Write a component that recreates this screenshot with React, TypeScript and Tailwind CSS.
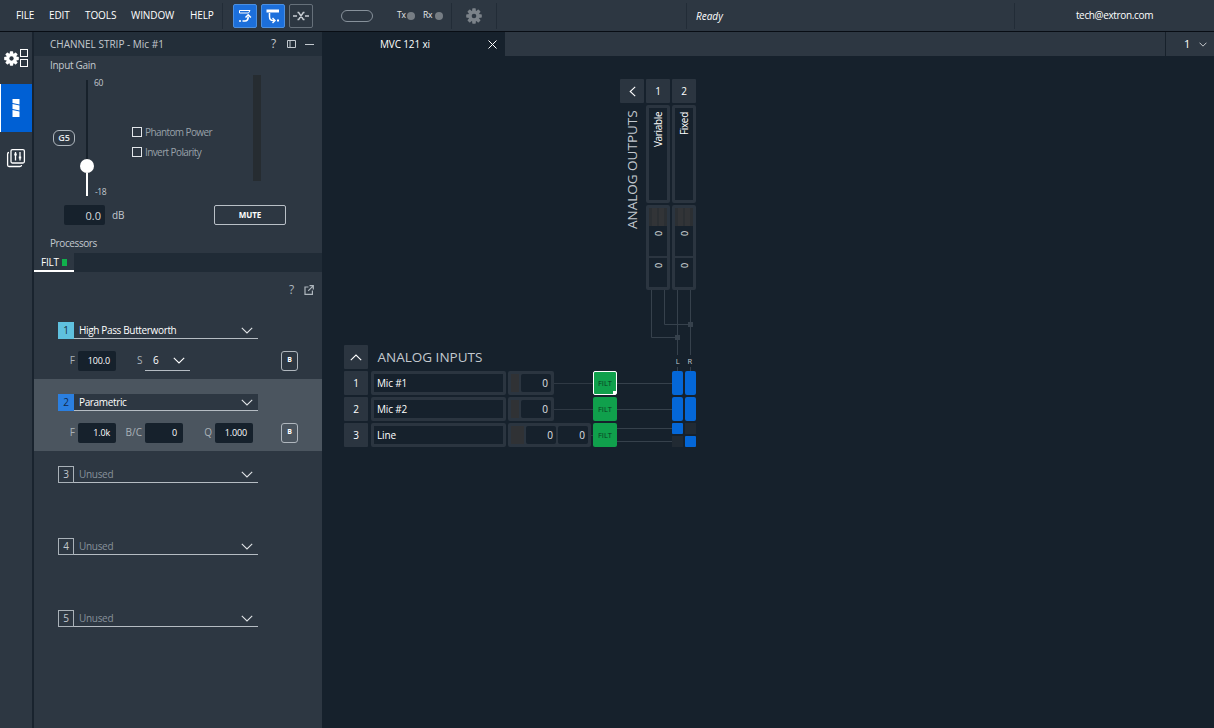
import type { ReactNode } from "react"
import clsx from "clsx"

type Param = { label: string; value: string; labelClass: string }

const menu = [
  { label: "FILE", width: "w-[33px]" },
  { label: "EDIT", width: "w-[36px]" },
  { label: "TOOLS", width: "w-[46px]" },
  { label: "WINDOW", width: "w-[59px]" },
  { label: "HELP", width: "w-[32px]" },
]

const parametric: Param[] = [
  { label: "F", value: "1.0k", labelClass: "w-[20px]" },
  { label: "B/C", value: "0", labelClass: "w-[29px]" },
  { label: "Q", value: "1.000", labelClass: "w-[32px]" },
]

const outputs = [
  { id: 1, name: "Variable" },
  { id: 2, name: "Fixed" },
]

const inputs = [
  { id: 1, name: "Mic #1", levels: ["0"], selected: true },
  { id: 2, name: "Mic #2", levels: ["0"], selected: false },
  { id: 3, name: "Line", levels: ["0", "0"], selected: false },
]

function Chevron({ className }: { className?: string }) {
  return (
    <svg className={className} width="12" height="7" viewBox="0 0 12 7" fill="none" stroke="currentColor" strokeWidth="1.1">
      <path d="M.8.8 6 6 11.2.8" />
    </svg>
  )
}

function Gear({ size, hole }: { size: number; hole: string }) {
  return (
    <svg width={size} height={size} viewBox="0 0 16 16">
      <g fill="currentColor">
        <circle cx="8" cy="8" r="5.8" />
        {[0, 45, 90, 135].map((a) => (
          <rect key={a} x="6.2" y="0.2" width="3.6" height="15.6" rx="0.8" transform={`rotate(${a} 8 8)`} />
        ))}
      </g>
      <circle cx="8" cy="8" r="2.3" fill={hole} />
    </svg>
  )
}

function Separator() {
  return <div className="h-[26px] w-px bg-[#222c37]" />
}

function TopBar() {
  return (
    <header className="flex h-[32px] shrink-0 items-center border-b border-[#080d14] bg-[#2d3742] text-white">
      <nav className="flex w-[222px] pl-[16px] text-[10px] font-medium">
        {menu.map((m) => (
          <span key={m.label} className={clsx("shrink-0 whitespace-nowrap tracking-[-0.1px]", m.width)}>
            {m.label}
          </span>
        ))}
      </nav>
      <Separator />
      <div className="ml-[10px] flex gap-[4px]">
        <div className="flex size-[24px] items-center justify-center rounded-[2px] border border-[#4b8fe0] bg-[#1c6fdb]">
          <svg width="16" height="16" viewBox="0 0 16 16" fill="none" stroke="white">
            <path d="M2.500 2.500h10.500l-1.500 2.500H2.500z" />
            <path d="M2 13h2M5.500 13h2.500c2 0 3.200-1 3.200-4.500" strokeWidth="1.600" />
            <path d="m8.500 9.500 2.700-2.700 2.700 2.700" strokeWidth="1.500" />
          </svg>
        </div>
        <div className="flex size-[24px] items-center justify-center rounded-[2px] border border-[#4b8fe0] bg-[#1c6fdb]">
          <svg width="16" height="16" viewBox="0 0 16 16" fill="none" stroke="white">
            <path d="M1.500 3h12.500" strokeWidth="3" />
            <path d="M4.500 5v3.500c0 2.800 1 4 3.500 4h1" strokeWidth="1.500" />
            <path d="m7.500 10 2.500 2.500L7.500 15" strokeWidth="1.400" />
            <path d="M12 12.500h2" strokeWidth="2" />
          </svg>
        </div>
        <div className="flex size-[24px] items-center justify-center rounded-[2px] border border-[#66707a]">
          <svg width="18" height="12" viewBox="0 0 18 12" fill="none" stroke="#c6ccd2" strokeWidth="1.400">
            <path d="M1 6h4M13 6h4" />
            <path d="M5.500 2.500h1.200l4.600 7h1.200M12.500 2.500h-1.200l-4.600 7H5.500" />
          </svg>
        </div>
      </div>
      <div className="ml-[28px] h-[12px] w-[32px] rounded-full border border-[#87919b]" />
      <div className="ml-[24px] flex w-[54px] items-center text-[8.5px] font-medium text-[#e5e9ec]">
        <span className="w-[10px] tracking-[-0.3px]">Tx</span>
        <span className="size-[8px] rounded-full bg-[#767d84]" />
        <span className="ml-[8px] w-[12px] tracking-[-0.3px]">Rx</span>
        <span className="size-[8px] rounded-full bg-[#767d84]" />
      </div>
      <Separator />
      <div className="flex w-[44px] justify-center text-[#7b8289]">
        <Gear size={16} hole="#2d3742" />
      </div>
      <Separator />
      <div className="w-[189px]" />
      <Separator />
      <div className="w-[327px] pl-[9px] pt-px text-[10px] font-medium italic">Ready</div>
      <Separator />
      <div className="flex-1 text-center text-[10px] font-medium tracking-[-0.35px]">tech@extron.com</div>
    </header>
  )
}

function Sidebar() {
  return (
    <aside className="flex w-[34px] shrink-0 flex-col border-r-2 border-[#19232e] bg-[#2d3742] text-white">
      <div className="flex h-[52px] items-center pl-[4px]">
        <Gear size={15} hole="#2d3742" />
        <div className="ml-px flex flex-col gap-[2px]">
          <div className="size-[8px] border border-white" />
          <div className="size-[8px] border border-white" />
        </div>
      </div>
      <div className="flex h-[48px] items-center border-l border-white bg-[#0060d4] pl-[11px]">
        <svg width="8" height="18" viewBox="0 0 8 18" fill="white">
          <path d="M.5 0h7v5.500L.5 4zM.5 5l7 1.500v5L.5 10zM.5 11l7 1.500V18h-7z" />
        </svg>
      </div>
      <div className="flex h-[52px] items-center justify-center">
        <svg width="20" height="20" viewBox="0 0 20 20" fill="none" stroke="white" strokeWidth="1.300">
          <rect x="5" y="1.600" width="13.400" height="13.400" rx="1.500" />
          <path d="M3 4.500c-1 0-1.400.4-1.400 1.400V17c0 1 .4 1.500 1.400 1.500h11c1 0 1.500-.5 1.500-1.500" />
          <path d="M9.500 4v8.500M14 4v8.500" />
          <path d="M8.300 6.500h2.400M12.800 9.500h2.400" strokeWidth="2.200" />
        </svg>
      </div>
    </aside>
  )
}

function InputGain() {
  return (
    <section className="h-[178px] text-[#c3c9cf]">
      <h2 className="h-[19px] pl-[16px] text-[10px] leading-[19px] tracking-[-0.3px]">Input Gain</h2>
      <div className="flex h-[130px]">
        <div className="ml-[19px] mt-[55px] flex h-[16px] w-[22px] items-center justify-center rounded-[6px] border border-[#aeb6bd] text-[9px] font-semibold text-[#e4e7ea]">
          G5
        </div>
        <div className="ml-[4px] mt-[5px] flex h-[116px] w-[16px] flex-col items-center">
          <div className="h-[79px] w-[2px] bg-[#17212b]" />
          <div className="size-[14px] shrink-0 rounded-full bg-white" />
          <div className="w-[2px] flex-1 bg-white" />
        </div>
        <div className="flex h-[123px] w-[38px] flex-col justify-between pt-[2px] text-[8.5px] leading-[12px] tracking-[-0.4px]">
          <span className="-ml-px">60</span>
          <span>-18</span>
        </div>
        <div className="-ml-px mt-[47px] flex w-[121px] flex-col text-[10px] tracking-[-0.6px] text-[#98a1a9]">
          {["Phantom Power", "Invert Polarity"].map((label) => (
            <label key={label} className="flex h-[20px] items-center gap-[3px] whitespace-nowrap">
              <span className="size-[10px] border border-[#e2e6ea]" />
              {label}
            </label>
          ))}
        </div>
        <div className="h-[106px] w-[8px] bg-[#262c31]" />
      </div>
      <div className="flex h-[20px] items-center">
        <div className="ml-[30px] h-[20px] w-[41px] rounded-[2px] bg-[#16212c] pr-[4px] text-right text-[11px] leading-[21px] text-[#d5dade]">0.0</div>
        <span className="ml-[7px] w-[102px] pt-px text-[10px]">dB</span>
        <button className="h-[20px] w-[72px] rounded-[2px] border border-[#b9c0c7] text-[8px] font-bold tracking-[-0.1px] text-white">MUTE</button>
      </div>
    </section>
  )
}

function NumberField({ param }: { param: Param }) {
  return (
    <>
      <span className={clsx("pr-[3px] text-right text-[10px] text-[#aab2b9]", param.labelClass)}>{param.label}</span>
      <span className="h-[20px] w-[38px] rounded-[2px] bg-[#16212c] pr-[6px] text-right text-[9px] font-medium leading-[20px] tracking-[-0.15px] text-white">
        {param.value}
      </span>
    </>
  )
}

function FilterSlot({ index, name, chip, active, children }: { index: number; name: string; chip?: string; active?: boolean; children?: ReactNode }) {
  return (
    <div className={clsx("h-[72px] pl-[24px] pt-[15px]", active && "bg-[#4b555f]")}>
      <div className="flex h-[17px] w-[200px]">
        <span
          className={clsx(
            "flex w-[16px] items-center justify-center text-[10px]",
            chip ? chip : "border border-[#a9b1b8] text-[#c3c9cf]"
          )}
        >
          {index}
        </span>
        <div className={clsx("flex flex-1 items-center border-b border-[#b5bcc3] pl-[5px] text-[10px]", active && "bg-[#2d3742]")}>
          <span className={clsx(chip ? "font-medium tracking-[-0.35px] text-white" : "tracking-[-0.3px] text-[#87919a]")}>{name}</span>
          <Chevron className="ml-auto mr-[5px] text-[#e0e3e6]" />
        </div>
      </div>
      {children && (
        <div className="mt-[11px] flex h-[21px] items-center">
          <div className="flex w-[223px] items-center">{children}</div>
          <span className="flex h-[20px] w-[17px] items-center justify-center rounded-[3px] border border-[#b0b7be] text-[7px] font-bold text-white">B</span>
        </div>
      )}
    </div>
  )
}

function ChannelStrip() {
  return (
    <div className="flex w-[288px] shrink-0 flex-col bg-[#2d3742]">
      <div className="flex h-[24px] items-center bg-[#232e39] pl-[16px] text-[#c3c9cf]">
        <span className="w-[221px] text-[10px] leading-[14px]">CHANNEL STRIP - Mic #1</span>
        <span className="w-[16px] text-[12px]">?</span>
        <svg width="9" height="9" viewBox="0 0 9 9" fill="none" stroke="currentColor">
          <path d="M.5 .5h8v7h-8zM3 .5v7" />
        </svg>
        <span className="ml-[9px] h-px w-[9px] bg-[#c3c9cf]" />
      </div>
      <InputGain />
      <div className="h-[19px] pl-[16px] text-[10px] leading-[19px] tracking-[-0.4px] text-[#c3c9cf]">Processors</div>
      <div className="flex h-[19px] bg-[#202b36]">
        <div className="flex w-[40px] items-center border-b-2 border-white bg-[#2d3742] pl-[7px] pt-px text-[10px] tracking-[-0.2px] text-white">
          FILT
          <span className="ml-[3px] h-[7px] w-[5px] bg-[#10b14c]" />
        </div>
      </div>
      <div className="flex h-[35px] items-center text-[#aeb6bd]">
        <span className="ml-[255px] w-[15px] text-[12px] leading-[16px]">?</span>
        <svg width="10" height="10" viewBox="0 0 10 10" fill="none" stroke="currentColor" strokeWidth="1.200">
          <path d="M4.500 2H1v7.400h7.400V5.500M5.500 .7h3.800V4.500M9.200.800 4.200 5.800" />
        </svg>
      </div>
      <FilterSlot index={1} name="High Pass Butterworth" chip="bg-[#5fc0de] text-[#16303c]">
        <NumberField param={{ label: "F", value: "100.0", labelClass: "w-[20px]" }} />
        <span className="w-[29px] pl-[21px] text-[10px] text-[#aab2b9]">S</span>
        <span className="flex h-[20px] w-[45px] items-center border-b border-[#b5bcc3] pl-[8px] text-[10px] text-white">
          6
          <Chevron className="ml-auto mr-[5px]" />
        </span>
      </FilterSlot>
      <FilterSlot index={2} name="Parametric" chip="bg-[#2b7fe0] text-[#10284a]" active>
        {parametric.map((p) => (
          <NumberField key={p.label} param={p} />
        ))}
      </FilterSlot>
      {[3, 4, 5].map((i) => (
        <FilterSlot key={i} index={i} name="Unused" />
      ))}
    </div>
  )
}

function HeaderCell({ children }: { children: ReactNode }) {
  return (
    <div className="flex size-[24px] shrink-0 items-center justify-center rounded-[1px] bg-[#2b3540] text-[10px] font-medium text-white">{children}</div>
  )
}

function Outputs() {
  return (
    <div className="ml-[276px] flex h-[211px] gap-[2px]">
      <div className="flex flex-col items-center">
        <HeaderCell>
          <svg width="7" height="11" viewBox="0 0 7 11" fill="none" stroke="currentColor" strokeWidth="1.100">
            <path d="M6.200.8 1.200 5.500l5 4.700" />
          </svg>
        </HeaderCell>
        <h2 className="mt-[7px] h-[120px] rotate-180 whitespace-nowrap text-right text-[13.5px] leading-[22px] text-[#c3c9cf] [writing-mode:vertical-rl]">ANALOG OUTPUTS</h2>
      </div>
      {outputs.map((o) => (
        <div key={o.id} className="flex flex-col gap-[2px]">
          <HeaderCell>{o.id}</HeaderCell>
          <div className="flex h-[98px] w-[24px] justify-center rounded-[2px] border-[3px] border-[#2b3540] pt-[4px]">
            <span className="rotate-180 text-right text-[10px] font-medium leading-[16px] tracking-[-0.35px] text-white [writing-mode:vertical-rl]">{o.name}</span>
          </div>
          <div className="flex h-[85px] w-[24px] flex-col rounded-[2px] border-[3px] border-[#2b3540]">
            <div className="flex h-[18px] justify-center gap-[2px] bg-[#2b2f33] px-[2px]">
              <div className="w-[5px] bg-[#323437]" />
              <div className="w-[5px] bg-[#323437]" />
            </div>
            <div className="flex h-[30px] justify-center pt-[5px]">
              <span className="rotate-180 text-right text-[9px] font-medium leading-[17px] text-[#e0e3e6] [writing-mode:vertical-rl]">0</span>
            </div>
            <div className="flex h-[31px] justify-center border-t-2 border-[#2b3540] pt-[5px]">
              <span className="rotate-180 text-right text-[9px] font-medium leading-[17px] text-[#e0e3e6] [writing-mode:vertical-rl]">0</span>
            </div>
          </div>
        </div>
      ))}
    </div>
  )
}

function Wiring() {
  return (
    <div className="flex w-[50px] flex-col">
      <svg width="50" height="65" viewBox="0 0 50 65" fill="none" stroke="#36414c">
        <path d="M5.500 0v47.500h26M18.500 0v34.500h26M31.500 0v65M44.500 0v65" />
        <path d="M29 45h5v5h-5zM42 32h5v5h-5z" fill="#36414c" stroke="none" />
      </svg>
      <div className="flex h-[12px] pl-[26px] text-center text-[7.5px] font-medium leading-[12px] text-[#c3c9cf]">
        <span className="w-[12px]">L</span>
        <span className="w-[13px]">R</span>
      </div>
      <div className="flex h-[4px] gap-[12px] pl-[31px]">
        <div className="w-px bg-[#36414c]" />
        <div className="w-px bg-[#36414c]" />
      </div>
    </div>
  )
}

function InputRow({ id, name, levels, selected }: (typeof inputs)[number]) {
  const stereo = levels.length > 1
  return (
    <div className="flex h-[24px] items-center">
      <HeaderCell>{id}</HeaderCell>
      <div className="ml-[3px] flex h-[24px] w-[135px] items-center rounded-[2px] border-[3px] border-[#2b3540] pl-[3px] text-[10px] font-medium tracking-[-0.15px] text-white">
        {name}
      </div>
      <div className={clsx("ml-[2px] flex h-[24px] rounded-[2px] border-[3px] border-[#2b3540] bg-[#2b3540]", stereo ? "w-[83px]" : "w-[46px]")}>
        <div className={clsx("mr-[2px] bg-[#303235]", stereo ? "w-[13px]" : "w-[8px]")} />
        {levels.map((l, i) => (
          <div
            key={i}
            className={clsx("flex-1 rounded-[2px] bg-[#16212c] pr-[3px] text-right text-[10px] leading-[18px] text-[#e0e3e6]", i > 0 && "ml-[2px]")}
          >
            {l}
          </div>
        ))}
      </div>
      <div className={clsx("h-px bg-[#2f3944]", stereo ? "w-[2px]" : "w-[39px]")} />
      <div
        className={clsx(
          "relative flex size-[24px] items-center justify-center rounded-[2px] bg-[#10a04c] pt-px text-[7.5px] font-medium text-[#0b3b22]",
          selected && "border border-white"
        )}
      >
        FILT
        {selected && <span className="absolute bottom-0 right-0 size-[3px] bg-white" />}
      </div>
      {stereo ? (
        <>
          <div className="flex w-[55px] flex-col gap-[12px]">
            <div className="h-px bg-[#36414c]" />
            <div className="h-px bg-[#36414c]" />
          </div>
          <div className="grid grid-cols-2 gap-[2px]">
            <div className="size-[11px] rounded-[1px] bg-[#0467d8]" />
            <div className="size-[11px] bg-[#212a33]" />
            <div className="size-[11px] bg-[#212a33]" />
            <div className="size-[11px] rounded-[1px] bg-[#0467d8]" />
          </div>
        </>
      ) : (
        <>
          <div className="h-px w-[55px] bg-[#36414c]" />
          <div className="flex gap-[2px]">
            <div className="h-[24px] w-[11px] rounded-[2px] bg-[#0467d8]" />
            <div className="h-[24px] w-[11px] rounded-[2px] bg-[#0467d8]" />
          </div>
        </>
      )}
    </div>
  )
}

function Workspace() {
  return (
    <main className="flex min-w-0 flex-1 flex-col bg-[#16212c]">
      <div className="flex h-[24px] text-white">
        <div className="flex w-[183px] items-center pl-[58px] text-[10px] font-medium">
          <span className="w-[108px] leading-[14px] tracking-[-0.15px]">MVC 121 xi</span>
          <svg width="9" height="9" viewBox="0 0 9 9" stroke="currentColor">
            <path d="M.5.500l8 8M8.500.500l-8 8" />
          </svg>
        </div>
        <div className="flex-1 bg-[#2d3742]" />
        <div className="flex w-[49px] items-center border-l border-[#17212b] bg-[#2d3742] pl-[18px] text-[11px]">
          <span className="w-[15px]">1</span>
          <Chevron className="h-[5px] w-[8px]" />
        </div>
      </div>
      <div className="pl-[22px] pt-[23px]">
        <Outputs />
        <div className="flex h-[81px] w-[352px] items-end justify-between">
          <div className="flex items-center gap-[9.5px] pb-[2px]">
            <HeaderCell>
              <Chevron className="rotate-180" />
            </HeaderCell>
            <h2 className="text-[13.5px] leading-[18px] text-[#c3c9cf]">ANALOG INPUTS</h2>
          </div>
          <Wiring />
        </div>
        <div className="flex flex-col gap-[2px]">
          {inputs.map((row) => (
            <InputRow key={row.id} {...row} />
          ))}
        </div>
      </div>
    </main>
  )
}

export default function App() {
  return (
    <div className="flex h-[728px] w-[1214px] flex-col overflow-hidden bg-[#16212c] font-['Open_Sans',sans-serif]">
      <TopBar />
      <div className="flex min-h-0 flex-1">
        <Sidebar />
        <ChannelStrip />
        <Workspace />
      </div>
    </div>
  )
}
